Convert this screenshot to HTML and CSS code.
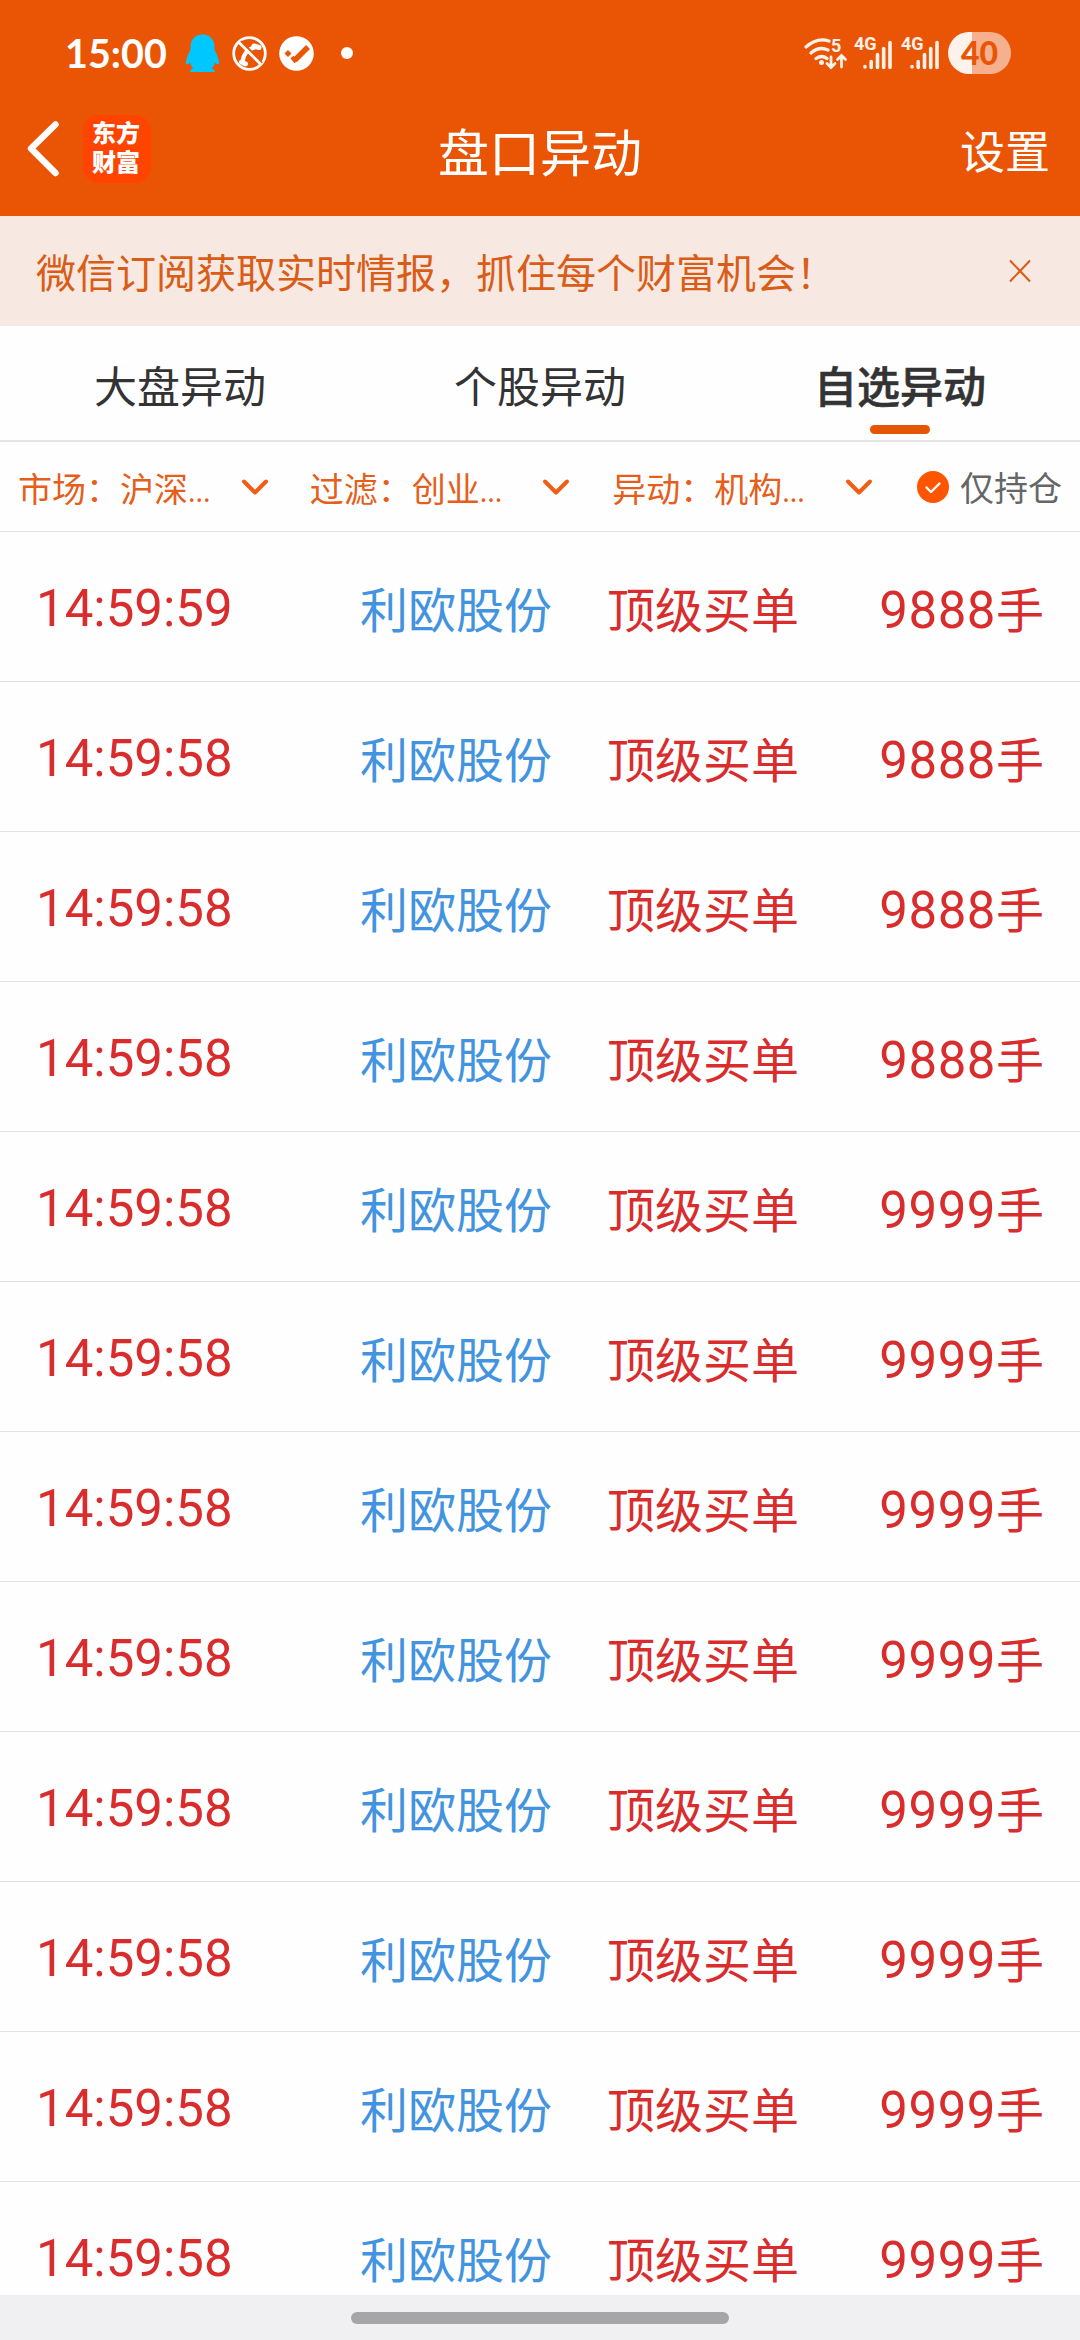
FILE: index.html
```html
<!DOCTYPE html>
<html lang="zh-CN">
<head>
  <meta charset="UTF-8">
  <title>盘口异动</title>
  <link rel="stylesheet" href="styles.css">
</head>
<body>

  <header>
    <div class="status-bar">
      <span class="clock">15:00</span>
      <svg class="status-left" width="170" height="42" viewBox="185 32 170 42">
        <path fill="#00c8ff" d="M202.500 34.500c-8 0-12 5.500-12 12.500v3c-2.500 4-4.500 9-4.500 12.500 0 2.500 1.500 2.500 4 0 .6 2.500 1.800 4.500 3.500 6-2.500.5-3.500 1.500-3.500 3.500h25c0-2-1-3-3.500-3.500 1.700-1.500 2.900-3.500 3.500-6 2.500 2.500 4 2.500 4 0 0-3.500-2-8.500-4.500-12.500v-3c0-7-4-12.500-12-12.500z"/>
        <circle cx="249.500" cy="53.500" r="15.800" fill="none" stroke="#fff" stroke-width="2.800"/>
        <path d="M243 63c-1-8 5-15 14-16" fill="none" stroke="#fff" stroke-width="4"/>
        <path d="M241.500 62l4 2M254 46l5 1.500" stroke="#fff" stroke-width="5" stroke-linecap="round"/>
        <path d="M241 41l21 22" stroke="#e95504" stroke-width="2.500"/>
        <path d="M239 42.500l22 22" stroke="#fff" stroke-width="2.800"/>
        <circle cx="296.500" cy="53.500" r="17.300" fill="#fff"/>
        <path d="M295 60l13-13" stroke="#e95504" stroke-width="5.500"/>
        <path d="M292 57l4 5" stroke="#e95504" stroke-width="4"/>
        <path d="M288 50l3.500 3.500-3.500 3.500-3.500-3.500z" fill="#e95504"/>
        <circle cx="347" cy="53" r="6" fill="#fff"/>
      </svg>
      <svg class="status-right" width="146" height="42" viewBox="802 32 146 42">
        <g fill="none" stroke="#fff0e8" stroke-width="3.300" stroke-linecap="round">
          <path d="M806 47q11-10 23-6"/>
          <path d="M811 53q8-7 17-3"/>
          <path d="M816 58.500q6-4 11 0"/>
          <path stroke-width="2.800" d="M831 57v10M827 63.500l4 4 4-4M841.500 67V56M837.500 59.500l4-4 4 4"/>
        </g>
        <circle cx="821.500" cy="62.500" r="2.500" fill="#fff0e8"/>
        <text class="wifi-num" x="831" y="52">5</text>
        <text class="net-label" x="854" y="50">4G</text>
        <text class="net-label" x="901" y="50">4G</text>
        <g stroke="#fff0e8" stroke-width="3.600" stroke-linecap="round">
          <path d="M865 66.500v.5M871.200 61.500v6M877.500 54.500v13M883.700 48.500v19M890 42.500v25"/>
          <path d="M912 66.500v.5M918.200 61.500v6M924.500 54.500v13M930.700 48.500v19M937 42.500v25"/>
        </g>
      </svg>
      <span class="battery">40</span>
    </div>

    <div class="title-bar">
      <div class="title-left">
        <svg width="34" height="58" viewBox="0 0 34 58">
          <path d="M29.500 4.500L5 28.500l24.500 24.500" fill="none" stroke="#fff" stroke-width="6.500" stroke-linecap="round" stroke-linejoin="round"/>
        </svg>
        <div class="logo"><span>东方</span><span>财富</span></div>
      </div>
      <h1>盘口异动</h1>
      <a class="settings">设置</a>
    </div>
  </header>

  <div class="notice">
    <span>微信订阅获取实时情报，抓住每个财富机会！</span>
    <svg width="24" height="24" viewBox="0 0 24 24">
      <path d="M2 1.500l20 21M22 1.500l-20 21" stroke="#dd5a14" stroke-width="2"/>
    </svg>
  </div>

  <nav class="tabs">
    <div class="tab">大盘异动</div>
    <div class="tab">个股异动</div>
    <div class="tab active">自选异动</div>
  </nav>

  <div class="filters">
    <div class="filter market">
      <span>市场：沪深<i>...</i></span>
      <svg width="28" height="18" viewBox="0 0 28 18"><path d="M3 3.500l11 11 11-11"/></svg>
    </div>
    <div class="filter">
      <span>过滤：创业<i>...</i></span>
      <svg width="28" height="18" viewBox="0 0 28 18"><path d="M3 3.500l11 11 11-11"/></svg>
    </div>
    <div class="filter kind">
      <span>异动：机构<i>...</i></span>
      <svg width="28" height="18" viewBox="0 0 28 18"><path d="M3 3.500l11 11 11-11"/></svg>
    </div>
    <div class="holding">
      <svg width="32" height="32" viewBox="0 0 32 32">
        <circle cx="16" cy="16" r="16" fill="#ff5500"/>
        <path d="M9.500 16.500l4.500 4.500 8.500-8.500" fill="none" stroke="#fff" stroke-width="2.400" stroke-linecap="round" stroke-linejoin="round"/>
      </svg>
      <span>仅持仓</span>
    </div>
  </div>

  <main class="list">
    <div class="row"><span class="time">14:59:59</span><span class="name">利欧股份</span><span class="type">顶级买单</span><span class="qty"><b>9888</b>手</span></div>
    <div class="row"><span class="time">14:59:58</span><span class="name">利欧股份</span><span class="type">顶级买单</span><span class="qty"><b>9888</b>手</span></div>
    <div class="row"><span class="time">14:59:58</span><span class="name">利欧股份</span><span class="type">顶级买单</span><span class="qty"><b>9888</b>手</span></div>
    <div class="row"><span class="time">14:59:58</span><span class="name">利欧股份</span><span class="type">顶级买单</span><span class="qty"><b>9888</b>手</span></div>
    <div class="row"><span class="time">14:59:58</span><span class="name">利欧股份</span><span class="type">顶级买单</span><span class="qty"><b>9999</b>手</span></div>
    <div class="row"><span class="time">14:59:58</span><span class="name">利欧股份</span><span class="type">顶级买单</span><span class="qty"><b>9999</b>手</span></div>
    <div class="row"><span class="time">14:59:58</span><span class="name">利欧股份</span><span class="type">顶级买单</span><span class="qty"><b>9999</b>手</span></div>
    <div class="row"><span class="time">14:59:58</span><span class="name">利欧股份</span><span class="type">顶级买单</span><span class="qty"><b>9999</b>手</span></div>
    <div class="row"><span class="time">14:59:58</span><span class="name">利欧股份</span><span class="type">顶级买单</span><span class="qty"><b>9999</b>手</span></div>
    <div class="row"><span class="time">14:59:58</span><span class="name">利欧股份</span><span class="type">顶级买单</span><span class="qty"><b>9999</b>手</span></div>
    <div class="row"><span class="time">14:59:58</span><span class="name">利欧股份</span><span class="type">顶级买单</span><span class="qty"><b>9999</b>手</span></div>
    <div class="row"><span class="time">14:59:58</span><span class="name">利欧股份</span><span class="type">顶级买单</span><span class="qty"><b>9999</b>手</span></div>
  </main>

  <footer class="home-bar">
    <div class="handle"></div>
  </footer>

</body>
</html>
```
FILE: styles.css
```css
* {
  box-sizing: border-box;
}

body {
  font-family: "Noto Sans CJK SC", sans-serif;
  background: #fefefe;
  color: #333;
  margin: 0;
  width: 1080px;
  height: 2340px;
  display: flex;
  flex-direction: column;
  overflow: hidden;
  white-space: nowrap;
}

svg {
  display: block;
  flex: none;
}

header {
  background: #e95504;
  color: #fff;
  height: 216px;
  flex: none;
}

/* phone status bar */
.status-bar {
  display: flex;
  align-items: center;
  height: 106px;
  padding: 0 69px 0 65px;
}

.clock {
  font: bold 39.5px/42px Lato, sans-serif;
  width: 120px;
}

.status-right {
  margin-left: auto;
}

.wifi-num {
  font: bold 18px Roboto, sans-serif;
  fill: #fff0e8;
}

.net-label {
  font: bold 18px Roboto, sans-serif;
  fill: #fff0e8;
}

.battery {
  width: 63px;
  height: 42px;
  border-radius: 21px;
  background: linear-gradient(to right, #fff1eb 24px, #f7b08e 24px);
  color: #e95504;
  font: 900 32px/41px Lato, sans-serif;
  text-align: center;
}

/* title */
.title-bar {
  display: grid;
  grid-template-columns: 1fr auto 1fr;
  align-items: center;
  height: 85px;
  padding: 0 30px 0 26px;
}

.title-left {
  display: flex;
  align-items: center;
  gap: 23px;
}

.logo {
  display: flex;
  flex-direction: column;
  gap: 5px;
  width: 68px;
  height: 68px;
  border-radius: 16px;
  background: #ff4400;
  font-size: 24px;
  font-weight: 900;
  line-height: 24px;
  padding: 5px 0 0 9px;
}

h1 {
  margin: 0;
  font-size: 51px;
  font-weight: 400;
  line-height: 74px;
  padding: 3px 0 0 4px;
}

.settings {
  font-size: 45px;
  padding-top: 2px;
  text-align: right;
}

/* notice */
.notice {
  display: flex;
  align-items: center;
  justify-content: space-between;
  flex: none;
  height: 110px;
  padding: 0 48px 0 36px;
  background: #f7e8e1;
  color: #d95c17;
  font-size: 40px;
}

/* tabs */
.tabs {
  display: flex;
  flex: none;
  height: 116px;
  border-bottom: 2px solid #e4e4e4;
}

.tab {
  flex: 1;
  display: flex;
  flex-direction: column;
  align-items: center;
  font-size: 43px;
  line-height: 62px;
  padding-top: 27px;
}

.tab.active {
  font-weight: 500;
  -webkit-text-stroke: 0.6px #333;
}

.tab.active::after {
  content: "";
  width: 60px;
  height: 9px;
  margin-top: 10px;
  border-radius: 5px;
  background: #e55604;
}

/* filters */
.filters {
  display: flex;
  align-items: center;
  flex: none;
  height: 90px;
  padding: 0 18px;
  border-bottom: 1px solid #e2e2e2;
  color: #e55e1c;
  font-size: 34px;
}

.filter {
  display: flex;
  align-items: center;
  justify-content: space-between;
  width: 261px;
  margin-right: 42px;
}

.market {
  width: 251px;
  margin-right: 41px;
}

.kind {
  margin-right: 44px;
}

.filter i {
  font-family: "Noto Sans", sans-serif;
  font-style: normal;
  font-size: 28px;
  line-height: 1;
}

.filter span {
  padding-top: 1px;
}

.filter path {
  fill: none;
  stroke: #f45c14;
  stroke-width: 4;
  stroke-linecap: round;
  stroke-linejoin: round;
}

.holding {
  display: flex;
  align-items: center;
  gap: 11px;
  color: #666;
}

/* records */
.list {
  flex: 1;
  min-height: 0;
  overflow: hidden;
}

.row {
  display: grid;
  grid-template-columns: 324px 247px 1fr auto;
  align-items: center;
  height: 150px;
  padding: 0 36px;
  border-bottom: 1px solid #e2e2e2;
  font-size: 48px;
  color: #d92d2d;
}

.time {
  font-family: Roboto, sans-serif;
  font-size: 51px;
  padding-top: 3px;
}

.name {
  color: #4394e0;
}

.qty b {
  font-family: Roboto, sans-serif;
  font-size: 51px;
  font-weight: 400;
  line-height: 60px;
  letter-spacing: 0.5px;
}

/* gesture bar */
.home-bar {
  display: flex;
  justify-content: center;
  flex: none;
  height: 45px;
  padding-top: 17px;
  background: #f0f0f2;
}

.handle {
  width: 378px;
  height: 12px;
  border-radius: 6px;
  background: #a6a6a8;
}
```
